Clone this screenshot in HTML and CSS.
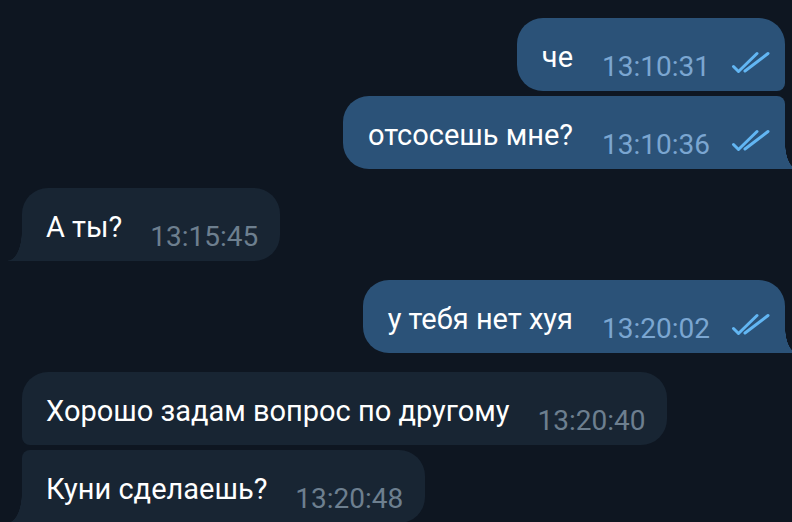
FILE: index.html
```html
<!DOCTYPE html>
<html lang="ru">
<head>
<meta charset="utf-8">
<link rel="stylesheet" href="styles.css">
</head>
<body>
<div class="chat">
  <div class="bubble out first">
    <span class="text">че</span>
    <span class="meta">13:10:31</span>
    <svg class="check" viewBox="0 0 40 24"><path d="M2.5 15.5 L7.5 20.5 L26 2.5 M14 20 L37 2.5"/></svg>
  </div>
  <div class="bubble out last tail">
    <span class="text">отсосешь мне?</span>
    <span class="meta">13:10:36</span>
    <svg class="check" viewBox="0 0 40 24"><path d="M2.5 15.5 L7.5 20.5 L26 2.5 M14 20 L37 2.5"/></svg>
  </div>
  <div class="bubble in single tail group">
    <span class="text">А ты?</span>
    <span class="meta">13:15:45</span>
  </div>
  <div class="bubble out single tail group">
    <span class="text">у тебя нет хуя</span>
    <span class="meta">13:20:02</span>
    <svg class="check" viewBox="0 0 40 24"><path d="M2.5 15.5 L7.5 20.5 L26 2.5 M14 20 L37 2.5"/></svg>
  </div>
  <div class="bubble in first group">
    <span class="text">Хорошо задам вопрос по другому</span>
    <span class="meta">13:20:40</span>
  </div>
  <div class="bubble in last tail">
    <span class="text">Куни сделаешь?</span>
    <span class="meta">13:20:48</span>
  </div>
</div>
</body>
</html>
```
FILE: styles.css
```css
html, body {
  margin: 0;
  padding: 0;
  background: #0e1621;
  overflow: hidden;
  height: 522px;
}
.chat {
  display: flex;
  flex-direction: column;
  gap: 5px;
  padding: 18px 7px 0 22px;
  font-family: Roboto, "Noto Sans", sans-serif;
}
.bubble {
  position: relative;
  display: flex;
  align-items: flex-end;
  height: 73px;
  box-sizing: border-box;
  border-radius: 26px;
}
.bubble.group { margin-top: 14px; }
.out {
  align-self: flex-end;
  background: #2b5278;
  padding: 0 14px 0 25px;
}
.in {
  align-self: flex-start;
  background: #182533;
  padding: 0 22px 0 24px;
}
.out.first { border-bottom-right-radius: 8px; }
.out.last { border-top-right-radius: 8px; }
.in.first { border-bottom-left-radius: 8px; }
.in.last { border-top-left-radius: 8px; }
.out.tail { border-bottom-right-radius: 0; }
.in.tail { border-bottom-left-radius: 0; }
.out.tail::after {
  content: "";
  position: absolute;
  right: -12px;
  bottom: 0;
  width: 12px;
  height: 26px;
  background: radial-gradient(ellipse 12px 26px at 100% 0, transparent 97%, #2b5278 100%);
}
.in.tail::after {
  content: "";
  position: absolute;
  left: -14px;
  bottom: 0;
  width: 14px;
  height: 30px;
  background: radial-gradient(ellipse 14px 30px at 0 0, transparent 97%, #182533 100%);
}
.text {
  color: #ffffff;
  font-size: 29px;
  line-height: 30px;
  padding-bottom: 19px;
  white-space: nowrap;
}
.meta {
  font-size: 28px;
  line-height: 30px;
  padding-bottom: 9px;
  margin-left: 28px;
  white-space: nowrap;
}
.out .meta { color: #7ba6d1; margin-left: 29px; }
.in .meta { color: #6d7f8f; }
.check {
  width: 40px;
  height: 24px;
  margin-left: 21px;
  margin-bottom: 16px;
  fill: none;
  stroke: #62b6f3;
  stroke-width: 3;
  stroke-linecap: round;
  stroke-linejoin: round;
}
```
